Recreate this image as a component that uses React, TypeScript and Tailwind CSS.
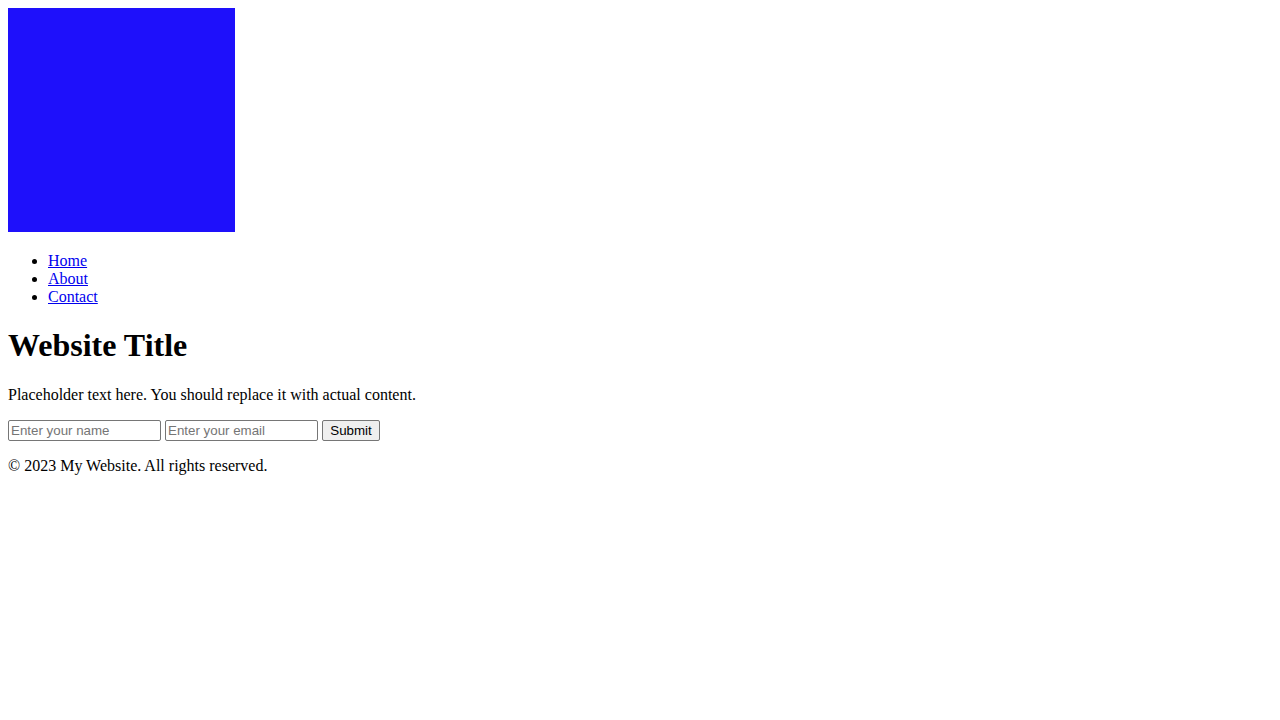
import React from "react";

const App = () => {
  return (
    <div className="min-h-screen bg-white p-2 text-black font-['Liberation_Serif','Times_New_Roman',serif] text-base leading-[normal]">
      {/* Header logo block */}
      <header>
        <div className="w-[227px] h-[224px] bg-[#1e10fb]" />
        <nav>
          <ul className="list-disc pl-10 mt-5 mb-4">
            <li>
              <a href="#" className="text-[#0000ee] underline">Home</a>
            </li>
            <li>
              <a href="#" className="text-[#0000ee] underline">About</a>
            </li>
            <li>
              <a href="#" className="text-[#0000ee] underline">Contact</a>
            </li>
          </ul>
        </nav>
      </header>

      <main>
        <h1 className="text-[32px] font-bold my-[21.44px]">Website Title</h1>
        <p className="my-4">Placeholder text here. You should replace it with actual content.</p>

        {/* Form */}
        <form className="my-4 flex items-center gap-1 font-['Liberation_Sans',Arial,sans-serif] text-[13.33px]">
          <input
            type="text"
            placeholder="Enter your name"
            className="w-[153px] h-[21px] border border-[#767676] rounded-[2px] px-[2px] bg-white placeholder:text-[#757575]"
          />
          <input
            type="email"
            placeholder="Enter your email"
            className="w-[153px] h-[21px] border border-[#767676] rounded-[2px] px-[2px] bg-white placeholder:text-[#757575]"
          />
          <button
            type="submit"
            className="w-[58px] h-[21px] border border-[#767676] rounded-[2px] bg-[#efefef] text-black"
          >
            Submit
          </button>
        </form>
      </main>

      <footer>
        <p className="my-4">© 2023 My Website. All rights reserved.</p>
      </footer>
    </div>
  );
};

export default App;
